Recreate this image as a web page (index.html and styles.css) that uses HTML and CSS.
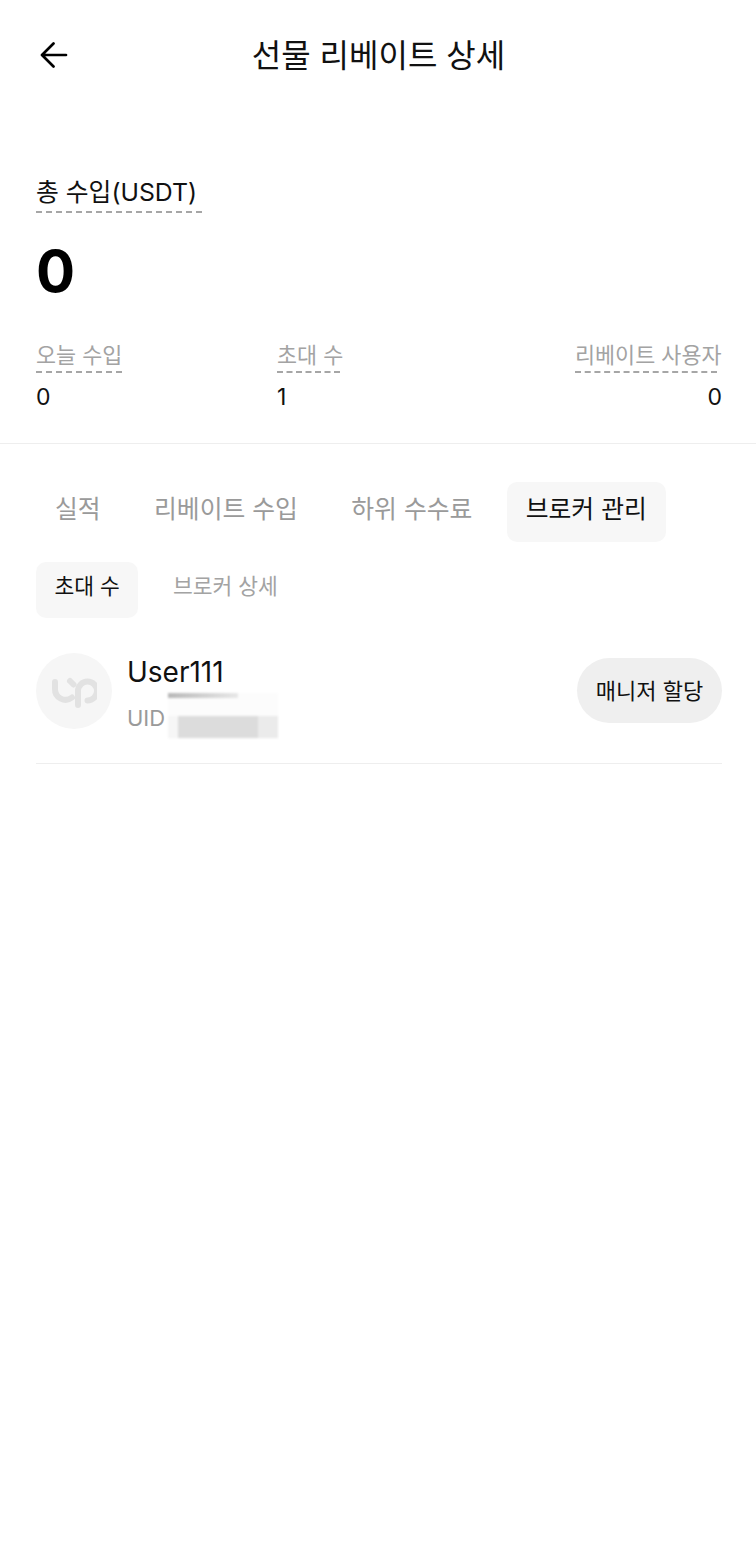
FILE: index.html
```html
<!DOCTYPE html>
<html lang="ko">
<head>
  <meta charset="UTF-8">
  <title>선물 리베이트 상세</title>
  <meta name="viewport" content="width=device-width, initial-scale=1.0">
  <link rel="stylesheet" href="styles.css">
</head>
<body>
  <div class="header">
    <button class="back-button">
      <svg width="28" height="26" viewBox="0 0 28 26" fill="none" stroke="#000" stroke-width="2.7" stroke-linecap="round" stroke-linejoin="round">
        <path d="M26 13H2.500M13.500 1.500L2 13l11.500 11.500"/>
      </svg>
    </button>
    <div class="header-title">선물 리베이트 상세</div>
  </div>

  <div class="summary">
    <div class="total-label"><span class="dashed">총 수입(USDT)</span></div>
    <div class="total-value">0</div>
    <div class="stats">
      <div class="stat">
        <span class="stat-label dashed">오늘 수입</span>
        <span class="stat-value">0</span>
      </div>
      <div class="stat stat-mid">
        <span class="stat-label dashed">초대 수</span>
        <span class="stat-value">1</span>
      </div>
      <div class="stat stat-right">
        <span class="stat-label dashed">리베이트 사용자</span>
        <span class="stat-value">0</span>
      </div>
    </div>
  </div>

  <div class="tabs">
    <div class="tab">실적</div>
    <div class="tab">리베이트 수입</div>
    <div class="tab">하위 수수료</div>
    <div class="tab tab-active">브로커 관리</div>
  </div>

  <div class="subtabs">
    <div class="subtab subtab-active">초대 수</div>
    <div class="subtab">브로커 상세</div>
  </div>

  <div class="user-row">
    <div class="avatar">
      <svg width="46" height="34" viewBox="0 0 46 34" fill="none" stroke="#e2e2e2" stroke-width="6" stroke-linecap="round">
        <path d="M4 8v7a10.500 10.500 0 0 0 17 8.500"/>
        <path d="M19 7l3.500 3.500"/>
        <path d="M27 31V17a9.500 9.500 0 1 1 9.500 9.500"/>
      </svg>
    </div>
    <div class="user-info">
      <div class="user-name">User111</div>
      <div class="user-uid">UID</div>
      <div class="uid-mask">
        <div class="mask-line"></div>
        <div class="mask-block"><div class="mask-dark"></div></div>
      </div>
    </div>
    <button class="assign-button">매니저 할당</button>
  </div>
</body>
</html>
```

FILE: styles.css
```css
body {
  margin: 0;
  background-color: #ffffff;
  color: #000000;
  font-family: "Inter", "Noto Sans CJK KR", sans-serif;
}

.header {
  display: flex;
  align-items: center;
  justify-content: center;
  position: relative;
  height: 108px;
}

.back-button {
  position: absolute;
  left: 40px;
  top: 42px;
  padding: 0;
  border: none;
  background: none;
  line-height: 0;
}

.header-title {
  font-size: 32px;
  color: #111111;
  margin: 0 0 2px 1px;
}

.summary {
  padding: 65px 34px 0 36px;
  height: 270px;
  border-bottom: 1px solid #eeeeee;
}

.dashed {
  display: inline-block;
  border-bottom: 2px dashed #a6a6a6;
}

.total-label {
  font-size: 24.800px;
  line-height: 38px;
  color: #111111;
}

.total-label .dashed {
  padding-right: 5px;
}

.total-value {
  font-size: 58px;
  font-weight: 700;
  line-height: 70px;
  margin-top: 23px;
}

.stats {
  display: flex;
  justify-content: space-between;
  margin-top: 33px;
}

.stat {
  display: flex;
  flex-direction: column;
  align-items: flex-start;
  width: 241px;
}

.stat-mid {
  width: 200px;
}

.stat-mid .stat-label {
  width: 63px;
  white-space: nowrap;
}

.stat-right {
  flex-grow: 1;
  align-items: flex-end;
}

.stat-label {
  font-size: 21.800px;
  line-height: 32px;
  color: #a3a3a3;
}

.stat-right .stat-label {
  width: 142px;
  margin-right: 5px;
  white-space: nowrap;
}

.stat-value {
  font-size: 23px;
  line-height: 28px;
  margin-top: 10px;
  color: #111111;
}

.tabs {
  display: flex;
  gap: 15.400px;
  padding: 38px 0 0 36px;
}

.tab {
  padding: 0 19px;
  height: 60px;
  line-height: 54px;
  border-radius: 10px;
  font-size: 24.800px;
  color: #9a9a9a;
  white-space: nowrap;
}

.tab-active {
  background-color: #f7f7f7;
  color: #111111;
}

.subtabs {
  display: flex;
  gap: 16px;
  padding: 20px 0 0 36px;
}

.subtab {
  padding: 0 18.500px;
  height: 56px;
  line-height: 48px;
  border-radius: 10px;
  font-size: 21.500px;
  color: #a3a3a3;
}

.subtab-active {
  background-color: #f7f7f7;
  color: #111111;
}

.user-row {
  display: flex;
  align-items: center;
  margin: 35px 34px 0 36px;
  padding-bottom: 34px;
  border-bottom: 1px solid #eeeeee;
}

.avatar {
  display: flex;
  align-items: center;
  justify-content: center;
  width: 76px;
  height: 76px;
  border-radius: 50%;
  background-color: #f6f6f6;
  flex-shrink: 0;
}

.user-info {
  position: relative;
  flex-grow: 1;
  height: 76px;
  margin-left: 15px;
}

.user-name {
  font-size: 28px;
  line-height: 38px;
  color: #111111;
}

.user-uid {
  font-size: 22px;
  line-height: 30px;
  margin-top: 12px;
  color: #9a9a9a;
}

/* blurred uid */
.uid-mask {
  position: absolute;
  left: 41px;
  top: 40px;
  width: 110px;
  height: 46px;
  background-color: #fcfcfc;
  filter: blur(1px);
}

.mask-line {
  width: 70px;
  height: 5px;
  background: linear-gradient(to right, #b8b8b8, #e8e8e8);
}

.mask-block {
  margin-top: 18px;
  width: 110px;
  height: 22px;
  background-color: #f6f6f6;
}

.mask-dark {
  margin-left: 10px;
  width: 100px;
  height: 100%;
  background: linear-gradient(to right, #dcdcdc 0 80%, #ebebeb 80%);
}

.assign-button {
  width: 145px;
  height: 65px;
  margin-bottom: 2px;
  border: none;
  border-radius: 33px;
  background-color: #efefef;
  color: #111111;
  font-family: inherit;
  font-size: 22px;
  white-space: nowrap;
  padding: 0 0 2px 0;
}
```
